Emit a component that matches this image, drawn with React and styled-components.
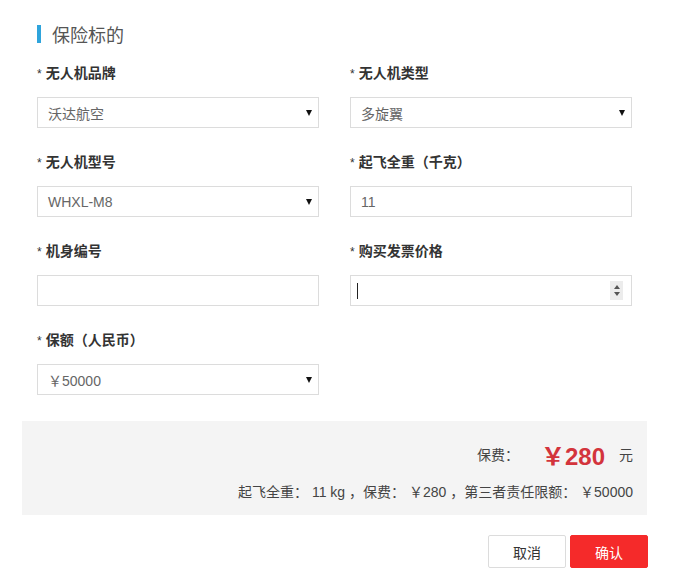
import React from "react";
import styled, { createGlobalStyle } from "styled-components";

const GlobalStyle = createGlobalStyle`
	body {
		margin: 0;
		background: #fff;
		font-family: "Liberation Sans", "Noto Sans CJK SC", sans-serif;
	}
`;

const Page = styled.div`
	width: 625px;
	padding: 24px 0 0 22px;
`;

const Title = styled.div`
	display: flex;
	align-items: center;
	margin-left: 15px;
	height: 20px;
	font-size: 18px;
	color: #555;
`;

const TitleBar = styled.span`
	width: 4px;
	height: 18px;
	background: #2fa4dc;
	margin-right: 11px;
`;

const Form = styled.div`
	display: grid;
	grid-template-columns: 282px 282px;
	column-gap: 31px;
	row-gap: 24px;
	padding: 19px 15px 0;
`;

const Field = styled.div`
	display: flex;
	flex-direction: column;
`;

const Label = styled.div`
	height: 20px;
	line-height: 20px;
	font-size: 14px;
	font-weight: bold;
	color: #333;
	margin-bottom: 14px;

	&::before {
		content: "*";
		font-weight: normal;
		font-size: 12px;
		margin-right: 4px;
	}
`;

const Box = styled.div`
	position: relative;
	box-sizing: border-box;
	height: 31px;
	border: 1px solid #dcdcdc;
	padding: 0 10px;
	display: flex;
	align-items: center;
	font-size: 14px;
	color: #666;
	background: #fff;
`;

const Select = styled(Box)`
	&::after {
		content: "";
		position: absolute;
		right: 6px;
		top: 12px;
		border-left: 3.5px solid transparent;
		border-right: 3.5px solid transparent;
		border-top: 6px solid #111;
	}
`;

const Caret = styled.span`
	width: 1px;
	height: 16px;
	background: #222;
	margin-left: -4px;
`;

const Spinner = styled.span`
	position: absolute;
	right: 8px;
	top: 5px;
	width: 13px;
	height: 19px;
	background: #ececec;
	display: flex;
	flex-direction: column;
	align-items: center;
	justify-content: center;
	gap: 3px;
`;

const Arrow = styled.span`
	border-left: 3.5px solid transparent;
	border-right: 3.5px solid transparent;
	${(p) => (p.up ? "border-bottom: 4px solid #555;" : "border-top: 4px solid #555;")}
`;

const Summary = styled.div`
	margin-top: 26px;
	background: #f4f4f4;
	padding: 20px 14px 13px;
	display: flex;
	flex-direction: column;
	align-items: flex-end;
	font-size: 14px;
	color: #444;
`;

const FeeLine = styled.div`
	display: flex;
	align-items: center;
	height: 26px;
`;

const Price = styled.span`
	font-size: 24px;
	font-weight: bold;
	color: #d3343c;
	margin: 0 14px 0 22px;
`;

const Detail = styled.div`
	margin-top: 15px;
	line-height: 20px;
`;

const Actions = styled.div`
	display: flex;
	justify-content: flex-end;
	gap: 4px;
	margin-top: 20px;
	margin-right: -1px;
`;

const Button = styled.button`
	width: 78px;
	height: 33px;
	font-size: 14px;
	font-family: inherit;
	border-radius: 2px;
	cursor: pointer;
	border: 1px solid ${(p) => (p.primary ? "#f52a2a" : "#dcdcdc")};
	background: ${(p) => (p.primary ? "#f52a2a" : "#fff")};
	color: ${(p) => (p.primary ? "#fff" : "#333")};
`;

export default function App() {
	return (
		<Page>
			<GlobalStyle />
			<Title>
				<TitleBar />
				保险标的
			</Title>
			<Form>
				<Field>
					<Label>无人机品牌</Label>
					<Select>沃达航空</Select>
				</Field>
				<Field>
					<Label>无人机类型</Label>
					<Select>多旋翼</Select>
				</Field>
				<Field>
					<Label>无人机型号</Label>
					<Select>WHXL-M8</Select>
				</Field>
				<Field>
					<Label>起飞全重（千克）</Label>
					<Box>11</Box>
				</Field>
				<Field>
					<Label>机身编号</Label>
					<Box />
				</Field>
				<Field>
					<Label>购买发票价格</Label>
					<Box>
						<Caret />
						<Spinner>
							<Arrow up />
							<Arrow />
						</Spinner>
					</Box>
				</Field>
				<Field>
					<Label>保额（人民币）</Label>
					<Select>￥50000</Select>
				</Field>
			</Form>
			<Summary>
				<FeeLine>
					保费：
					<Price>￥280</Price>元
				</FeeLine>
				<Detail>起飞全重： 11 kg ，保费： ￥280 ，第三者责任限额： ￥50000</Detail>
			</Summary>
			<Actions>
				<Button>取消</Button>
				<Button primary>确认</Button>
			</Actions>
		</Page>
	);
}
